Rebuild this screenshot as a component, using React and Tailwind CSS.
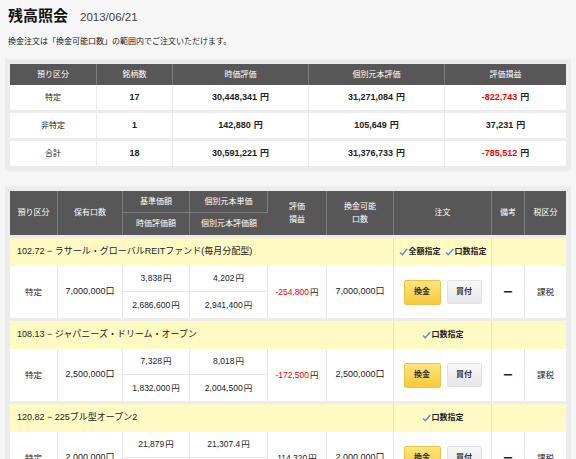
import React from 'react';

const summary = [
  { kind: '特定', count: '17', value: '30,448,341', cost: '31,271,084', pl: '-822,743', neg: true },
  { kind: '非特定', count: '1', value: '142,880', cost: '105,649', pl: '37,231', neg: false },
  { kind: '合計', count: '18', value: '30,591,221', cost: '31,376,733', pl: '-785,512', neg: true },
];

const funds = [
  {
    name: '102.72 − ラサール・グローバルREITファンド(毎月分配型)',
    full: true,
    kind: '特定',
    qty: '7,000,000',
    base: '3,838',
    unit: '4,202',
    mv: '2,686,600',
    cost: '2,941,400',
    pl: '-254,800',
    neg: true,
    avail: '7,000,000',
  },
  {
    name: '108.13 − ジャパニーズ・ドリーム・オープン',
    full: false,
    kind: '特定',
    qty: '2,500,000',
    base: '7,328',
    unit: '8,018',
    mv: '1,832,000',
    cost: '2,004,500',
    pl: '-172,500',
    neg: true,
    avail: '2,500,000',
  },
  {
    name: '120.82 − 225ブル型オープン2',
    full: false,
    kind: '特定',
    qty: '2,000,000',
    base: '21,879',
    unit: '21,307.4',
    mv: '4,375,800',
    cost: '4,261,480',
    pl: '114,320',
    neg: false,
    avail: '2,000,000',
  },
];

const cols = 'grid grid-cols-[48px_65px_67px_78px_59px_67px_98px_33px_41px]';

function Check({ label }) {
  return (
    <span className="flex items-center gap-[1px]">
      <svg width="9" height="8" viewBox="0 0 9 8">
        <path d="M1 4.5 L3.3 6.8 L8.3 1" fill="none" stroke="#4f8fd9" strokeWidth="1.4" />
      </svg>
      <span className="font-bold text-[8px] text-[#222]">{label}</span>
    </span>
  );
}

function Fund({ f }) {
  const cell = 'bg-white border-r border-[#e6e6e6] flex items-center justify-center text-[8.5px] text-[#222]';
  return (
    <div className="mt-[3px] first:mt-0">
      <div className={`${cols} h-[28px] bg-[#fff9c4]`}>
        <div className="col-span-6 flex items-center pl-[7px] text-[9px] text-[#222] border-r border-[#ece6a8]">
          {f.name}
        </div>
        <div className="flex items-center justify-center gap-[4px] border-r border-[#ece6a8]">
          {f.full && <Check label="全額指定" />}
          <Check label="口数指定" />
        </div>
        <div className="col-span-2"></div>
      </div>
      <div className={`${cols} grid-rows-[26px_26px]`}>
        <div className={`${cell} row-span-2`}>{f.kind}</div>
        <div className={`${cell} row-span-2 text-[9px]`}>
          {f.qty}<span className="text-[9px]">口</span>
        </div>
        <div className={`${cell} border-b`}>{f.base}<span className="ml-[1px]">円</span></div>
        <div className={`${cell} border-b`}>{f.unit}<span className="ml-[1px]">円</span></div>
        <div className={`${cell} row-span-2 col-start-5 row-start-1`}>
          <span className={f.neg ? 'text-[#f00]' : ''}>{f.pl}</span>
          <span className="ml-[1px]">円</span>
        </div>
        <div className={`${cell} row-span-2 col-start-6 row-start-1 text-[9px]`}>
          {f.avail}<span className="text-[9px]">口</span>
        </div>
        <div className={`${cell} row-span-2 col-start-7 row-start-1 gap-[6px]`}>
          <button className="w-[37px] h-[25px] rounded-[2px] border border-[#ecc24a] bg-gradient-to-b from-[#ffe57a] to-[#f7c936] text-[8px] font-bold text-[#333]">
            換金
          </button>
          <button className="w-[35px] h-[24px] rounded-[2px] border border-[#e2e2e2] bg-gradient-to-b from-[#f8f8f8] to-[#e6e6e6] text-[8px] font-bold text-[#333]">
            買付
          </button>
        </div>
        <div className={`${cell} row-span-2 col-start-8 row-start-1 font-bold text-[10px]`}>ー</div>
        <div className={`${cell} row-span-2 col-start-9 row-start-1 border-r-0`}>課税</div>
        <div className={`${cell} col-start-3 row-start-2`}>{f.mv}<span className="ml-[1px]">円</span></div>
        <div className={`${cell} col-start-4 row-start-2`}>{f.cost}<span className="ml-[1px]">円</span></div>
      </div>
    </div>
  );
}

export default function App() {
  const th = 'flex items-center justify-center text-white text-[8px] border-r border-[#7d7d7d] last:border-r-0';
  return (
    <div className="min-h-screen bg-[#f6f6f6] pt-[3px] px-[5px] font-['Liberation_Sans','Noto_Sans_CJK_JP',sans-serif] text-[#222]">
      <div className="h-6 flex items-baseline pl-[3px] pt-[3px]">
        <h1 className="text-[15px] font-bold leading-[20px] text-[#111]">残高照会</h1>
        <span className="ml-[12px] text-[11.5px] text-[#444]">2013/06/21</span>
      </div>
      <p className="mt-[9px] pl-[3px] text-[8px] leading-[12px] text-[#222]">
        換金注文は「換金可能口数」の範囲内でご注文いただけます。
      </p>

      {/* 残高サマリー */}
      <div className="mt-[11px] p-[5px] bg-[#ececec]">
        <div className="grid grid-cols-[87px_76px_136px_136px_121px] h-[21px] bg-[#575757]">
          <div className={th}>預り区分</div>
          <div className={th}>銘柄数</div>
          <div className={th}>時価評価</div>
          <div className={th}>個別元本評価</div>
          <div className={th}>評価損益</div>
        </div>
        {summary.map((r, i) => (
          <div
            key={r.kind}
            className={`grid grid-cols-[87px_76px_136px_136px_121px] h-[25px] bg-white ${i > 0 ? 'mt-[3px]' : ''}`}
          >
            <div className="flex items-center justify-center text-[8px] border-r border-[#ececec]">{r.kind}</div>
            <div className="flex items-center justify-center text-[9px] font-bold border-r border-[#ececec]">{r.count}</div>
            <div className="flex items-center justify-center text-[9px] font-bold border-r border-[#ececec]">
              {r.value}<span className="ml-[3px]">円</span>
            </div>
            <div className="flex items-center justify-center text-[9px] font-bold border-r border-[#ececec]">
              {r.cost}<span className="ml-[3px]">円</span>
            </div>
            <div className="flex items-center justify-center text-[9px] font-bold">
              <span className={r.neg ? 'text-[#f00]' : ''}>{r.pl}</span>
              <span className="ml-[3px]">円</span>
            </div>
          </div>
        ))}
      </div>

      {/* 保有明細 */}
      <div className="mt-[15px] p-[5px] bg-[#ececec]">
        <div className={`${cols} grid-rows-[22px_22px] bg-[#575757]`}>
          <div className={`${th} row-span-2`}>預り区分</div>
          <div className={`${th} row-span-2`}>保有口数</div>
          <div className={`${th} border-b`}>基準価額</div>
          <div className={`${th} border-b`}>個別元本単価</div>
          <div className={`${th} row-span-2 col-start-5 row-start-1 flex-col leading-[13px]`}>
            <span>評価</span>
            <span>損益</span>
          </div>
          <div className={`${th} row-span-2 col-start-6 row-start-1 flex-col leading-[13px]`}>
            <span>換金可能</span>
            <span>口数</span>
          </div>
          <div className={`${th} row-span-2 col-start-7 row-start-1`}>注文</div>
          <div className={`${th} row-span-2 col-start-8 row-start-1`}>備考</div>
          <div className={`${th} row-span-2 col-start-9 row-start-1 border-r-0`}>税区分</div>
          <div className={`${th} col-start-3 row-start-2`}>時価評価額</div>
          <div className={`${th} col-start-4 row-start-2`}>個別元本評価額</div>
        </div>
        {funds.map((f) => (
          <Fund key={f.name} f={f} />
        ))}
      </div>
    </div>
  );
}
